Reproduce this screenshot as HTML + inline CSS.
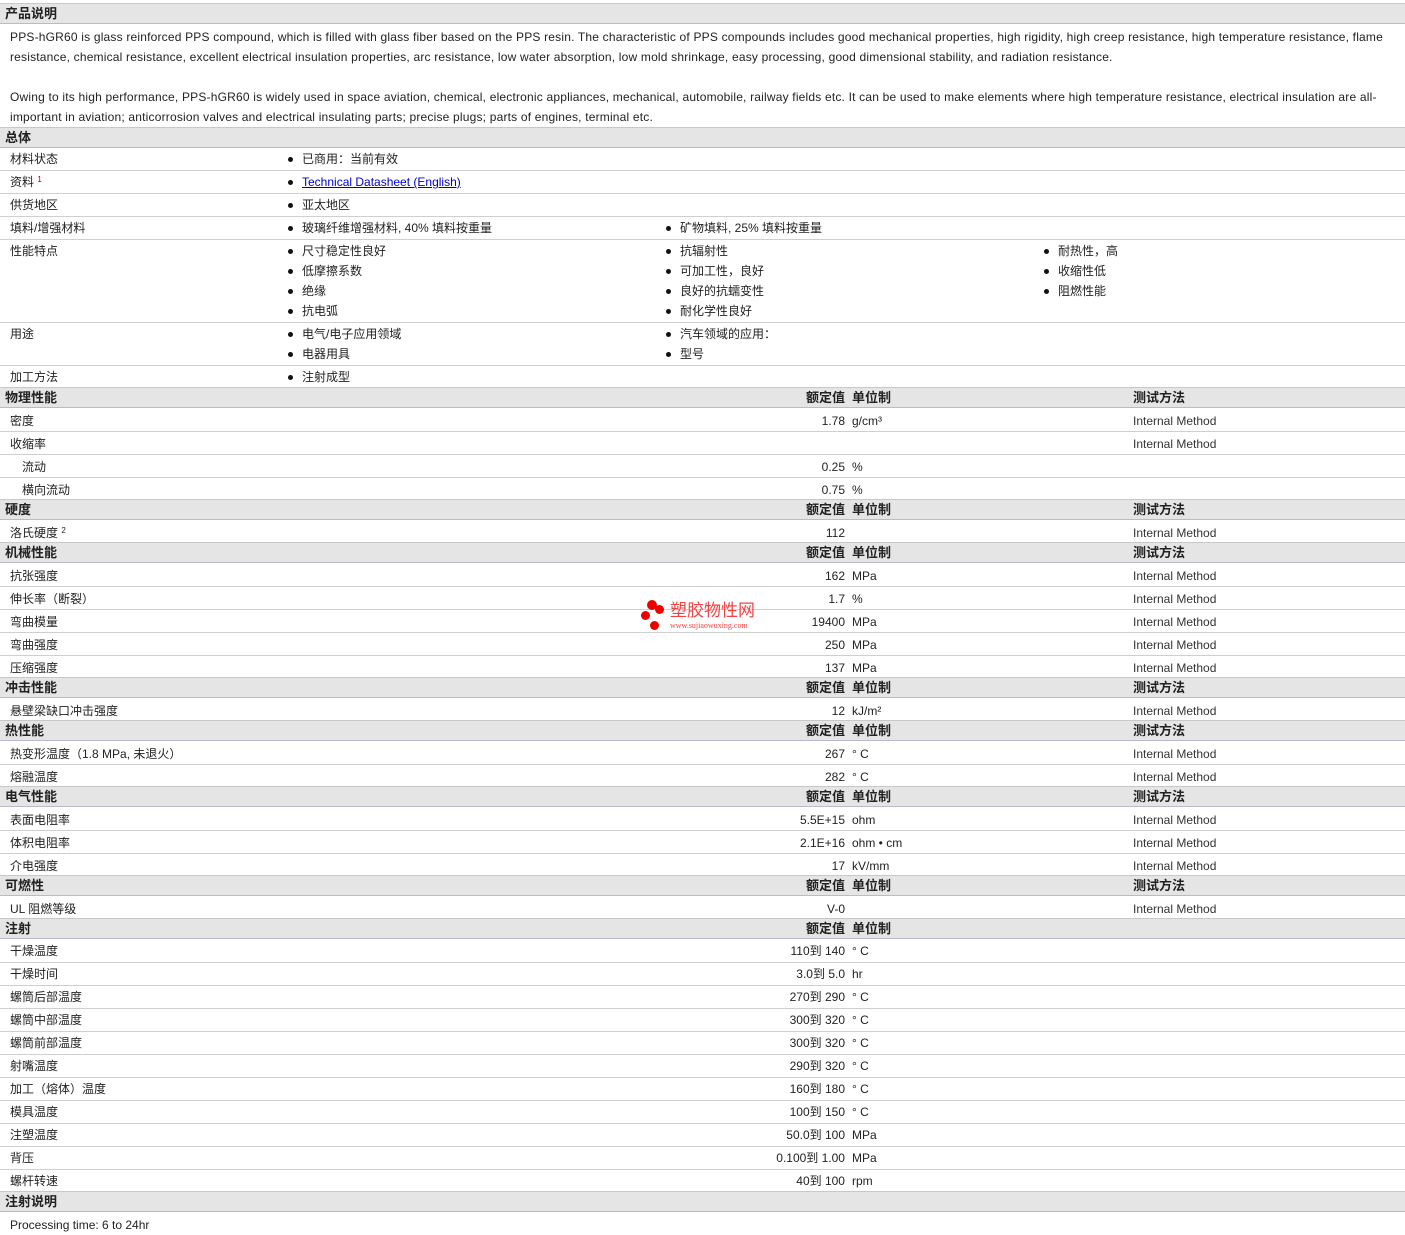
<!DOCTYPE html>
<html><head><meta charset="utf-8"><style>
body{margin:0;width:1405px;height:1233px;background:#fff;position:relative;overflow:hidden;font-family:"Liberation Sans","Noto Sans CJK SC",sans-serif;font-size:12px;color:#222}
.h{position:absolute;left:0;width:1405px;height:19px;background:#e6e5e5;border-top:1px solid #c8c8c8;border-bottom:1px solid #bdb8cc;font-weight:bold;font-size:13px;line-height:19px}
.r{position:absolute;left:0;width:1405px;border-bottom:1px solid #cfcfcf}
.t,.v,.u,.m,.b{margin-top:1px}
.h .t,.h .v,.h .u,.h .m{margin-top:0}
.t{position:absolute;white-space:nowrap;line-height:20px}
.d{letter-spacing:0.19px}
.v{position:absolute;right:560px;white-space:nowrap;line-height:20px;text-align:right}
.u{position:absolute;left:852px;white-space:nowrap;line-height:20px}
.m{position:absolute;left:1133px;white-space:nowrap;line-height:20px;color:#333}
.b{position:absolute;white-space:nowrap;line-height:20px}
.b:before{content:"";position:absolute;left:-14px;top:8px;width:5px;height:5px;border-radius:50%;background:#111}
sup{font-size:8px;position:relative;top:-4px;vertical-align:baseline;line-height:0}
a{color:#00c;text-decoration:underline}
</style></head><body>

<div class="h" style="top:3px"><span class="t" style="left:5px;line-height:19px">产品说明</span></div>
<div class="t d" style="left:10px;top:26px">PPS-hGR60 is glass reinforced PPS compound, which is filled with glass fiber based on the PPS resin. The characteristic of PPS compounds includes good mechanical properties, high rigidity, high creep resistance, high temperature resistance, flame</div>
<div class="t d" style="left:10px;top:46px">resistance, chemical resistance, excellent electrical insulation properties, arc resistance, low water absorption, low mold shrinkage, easy processing, good dimensional stability, and radiation resistance.</div>
<div class="t d" style="left:10px;top:86px">Owing to its high performance, PPS-hGR60 is widely used in space aviation, chemical, electronic appliances, mechanical, automobile, railway fields etc. It can be used to make elements where high temperature resistance, electrical insulation are all-</div>
<div class="t d" style="left:10px;top:106px">important in aviation; anticorrosion valves and electrical insulating parts; precise plugs; parts of engines, terminal etc.</div>

<div class="h" style="top:127px"><span class="t" style="left:5px;line-height:19px">总体</span></div>
<div class="r" style="top:148px;height:22px"><span class="t" style="left:10px">材料状态</span><span class="b" style="left:302px">已商用：当前有效</span></div>
<div class="r" style="top:171px;height:22px"><span class="t" style="left:10px">资料 <sup style="color:#a00">1</sup></span><span class="b" style="left:302px"><a>Technical Datasheet (English)</a></span></div>
<div class="r" style="top:194px;height:22px"><span class="t" style="left:10px">供货地区</span><span class="b" style="left:302px">亚太地区</span></div>
<div class="r" style="top:217px;height:22px"><span class="t" style="left:10px">填料/增强材料</span><span class="b" style="left:302px">玻璃纤维增强材料, 40% 填料按重量</span><span class="b" style="left:680px">矿物填料, 25% 填料按重量</span></div>
<div class="r" style="top:240px;height:82px"><span class="t" style="left:10px">性能特点</span>
<span class="b" style="left:302px;top:0">尺寸稳定性良好</span><span class="b" style="left:302px;top:20px">低摩擦系数</span><span class="b" style="left:302px;top:40px">绝缘</span><span class="b" style="left:302px;top:60px">抗电弧</span>
<span class="b" style="left:680px;top:0">抗辐射性</span><span class="b" style="left:680px;top:20px">可加工性，良好</span><span class="b" style="left:680px;top:40px">良好的抗蠕变性</span><span class="b" style="left:680px;top:60px">耐化学性良好</span>
<span class="b" style="left:1058px;top:0">耐热性，高</span><span class="b" style="left:1058px;top:20px">收缩性低</span><span class="b" style="left:1058px;top:40px">阻燃性能</span></div>
<div class="r" style="top:323px;height:42px"><span class="t" style="left:10px">用途</span>
<span class="b" style="left:302px;top:0">电气/电子应用领域</span><span class="b" style="left:302px;top:20px">电器用具</span>
<span class="b" style="left:680px;top:0">汽车领域的应用：</span><span class="b" style="left:680px;top:20px">型号</span></div>
<div class="r" style="top:366px;height:21px;border:none"><span class="t" style="left:10px">加工方法</span><span class="b" style="left:302px">注射成型</span></div>

<div class="h" style="top:387px"><span class="t" style="left:5px;line-height:19px">物理性能</span><span class="v" style="line-height:19px">额定值</span><span class="u" style="line-height:19px">单位制</span><span class="m" style="line-height:19px;color:#222">测试方法</span></div>
<div class="r" style="top:410px;height:21px"><span class="t" style="left:10px">密度</span><span class="v">1.78</span><span class="u">g/cm³</span><span class="m">Internal Method</span></div>
<div class="r" style="top:433px;height:21px"><span class="t" style="left:10px">收缩率</span><span class="m">Internal Method</span></div>
<div class="r" style="top:456px;height:21px"><span class="t" style="left:22px">流动</span><span class="v">0.25</span><span class="u">%</span></div>
<div class="r" style="top:479px;height:20px;border:none"><span class="t" style="left:22px">横向流动</span><span class="v">0.75</span><span class="u">%</span></div>

<div class="h" style="top:499px"><span class="t" style="left:5px;line-height:19px">硬度</span><span class="v" style="line-height:19px">额定值</span><span class="u" style="line-height:19px">单位制</span><span class="m" style="line-height:19px;color:#222">测试方法</span></div>
<div class="r" style="top:522px;height:20px;border:none"><span class="t" style="left:10px">洛氏硬度 <sup>2</sup></span><span class="v">112</span><span class="m">Internal Method</span></div>

<div class="h" style="top:542px"><span class="t" style="left:5px;line-height:19px">机械性能</span><span class="v" style="line-height:19px">额定值</span><span class="u" style="line-height:19px">单位制</span><span class="m" style="line-height:19px;color:#222">测试方法</span></div>
<div class="r" style="top:565px;height:21px"><span class="t" style="left:10px">抗张强度</span><span class="v">162</span><span class="u">MPa</span><span class="m">Internal Method</span></div>
<div class="r" style="top:588px;height:21px"><span class="t" style="left:10px">伸长率（断裂）</span><span class="v">1.7</span><span class="u">%</span><span class="m">Internal Method</span></div>
<div class="r" style="top:611px;height:21px"><span class="t" style="left:10px">弯曲模量</span><span class="v">19400</span><span class="u">MPa</span><span class="m">Internal Method</span></div>
<div class="r" style="top:634px;height:21px"><span class="t" style="left:10px">弯曲强度</span><span class="v">250</span><span class="u">MPa</span><span class="m">Internal Method</span></div>
<div class="r" style="top:657px;height:20px;border:none"><span class="t" style="left:10px">压缩强度</span><span class="v">137</span><span class="u">MPa</span><span class="m">Internal Method</span></div>

<div class="h" style="top:677px"><span class="t" style="left:5px;line-height:19px">冲击性能</span><span class="v" style="line-height:19px">额定值</span><span class="u" style="line-height:19px">单位制</span><span class="m" style="line-height:19px;color:#222">测试方法</span></div>
<div class="r" style="top:700px;height:20px;border:none"><span class="t" style="left:10px">悬壁梁缺口冲击强度</span><span class="v">12</span><span class="u">kJ/m²</span><span class="m">Internal Method</span></div>

<div class="h" style="top:720px"><span class="t" style="left:5px;line-height:19px">热性能</span><span class="v" style="line-height:19px">额定值</span><span class="u" style="line-height:19px">单位制</span><span class="m" style="line-height:19px;color:#222">测试方法</span></div>
<div class="r" style="top:743px;height:21px"><span class="t" style="left:10px">热变形温度（1.8 MPa, 未退火）</span><span class="v">267</span><span class="u">° C</span><span class="m">Internal Method</span></div>
<div class="r" style="top:766px;height:20px;border:none"><span class="t" style="left:10px">熔融温度</span><span class="v">282</span><span class="u">° C</span><span class="m">Internal Method</span></div>

<div class="h" style="top:786px"><span class="t" style="left:5px;line-height:19px">电气性能</span><span class="v" style="line-height:19px">额定值</span><span class="u" style="line-height:19px">单位制</span><span class="m" style="line-height:19px;color:#222">测试方法</span></div>
<div class="r" style="top:809px;height:21px"><span class="t" style="left:10px">表面电阻率</span><span class="v">5.5E+15</span><span class="u">ohm</span><span class="m">Internal Method</span></div>
<div class="r" style="top:832px;height:21px"><span class="t" style="left:10px">体积电阻率</span><span class="v">2.1E+16</span><span class="u">ohm • cm</span><span class="m">Internal Method</span></div>
<div class="r" style="top:855px;height:20px;border:none"><span class="t" style="left:10px">介电强度</span><span class="v">17</span><span class="u">kV/mm</span><span class="m">Internal Method</span></div>

<div class="h" style="top:875px"><span class="t" style="left:5px;line-height:19px">可燃性</span><span class="v" style="line-height:19px">额定值</span><span class="u" style="line-height:19px">单位制</span><span class="m" style="line-height:19px;color:#222">测试方法</span></div>
<div class="r" style="top:898px;height:20px;border:none"><span class="t" style="left:10px">UL 阻燃等级</span><span class="v">V-0</span><span class="m">Internal Method</span></div>

<div class="h" style="top:918px"><span class="t" style="left:5px;line-height:19px">注射</span><span class="v" style="line-height:19px">额定值</span><span class="u" style="line-height:19px">单位制</span></div>
<div class="r" style="top:940px;height:22px"><span class="t" style="left:10px">干燥温度</span><span class="v">110到 140</span><span class="u">° C</span></div>
<div class="r" style="top:963px;height:22px"><span class="t" style="left:10px">干燥时间</span><span class="v">3.0到 5.0</span><span class="u">hr</span></div>
<div class="r" style="top:986px;height:22px"><span class="t" style="left:10px">螺筒后部温度</span><span class="v">270到 290</span><span class="u">° C</span></div>
<div class="r" style="top:1009px;height:22px"><span class="t" style="left:10px">螺筒中部温度</span><span class="v">300到 320</span><span class="u">° C</span></div>
<div class="r" style="top:1032px;height:22px"><span class="t" style="left:10px">螺筒前部温度</span><span class="v">300到 320</span><span class="u">° C</span></div>
<div class="r" style="top:1055px;height:22px"><span class="t" style="left:10px">射嘴温度</span><span class="v">290到 320</span><span class="u">° C</span></div>
<div class="r" style="top:1078px;height:22px"><span class="t" style="left:10px">加工（熔体）温度</span><span class="v">160到 180</span><span class="u">° C</span></div>
<div class="r" style="top:1101px;height:22px"><span class="t" style="left:10px">模具温度</span><span class="v">100到 150</span><span class="u">° C</span></div>
<div class="r" style="top:1124px;height:22px"><span class="t" style="left:10px">注塑温度</span><span class="v">50.0到 100</span><span class="u">MPa</span></div>
<div class="r" style="top:1147px;height:22px"><span class="t" style="left:10px">背压</span><span class="v">0.100到 1.00</span><span class="u">MPa</span></div>
<div class="r" style="top:1170px;height:21px;border:none"><span class="t" style="left:10px">螺杆转速</span><span class="v">40到 100</span><span class="u">rpm</span></div>

<div class="h" style="top:1191px"><span class="t" style="left:5px;line-height:19px">注射说明</span></div>
<div class="t" style="left:10px;top:1214px">Processing time: 6 to 24hr</div>

<div style="position:absolute;left:640px;top:599px;width:130px;height:34px">
<div style="position:absolute;left:7px;top:1px;width:10px;height:10px;border-radius:50%;background:#e00"></div>
<div style="position:absolute;left:15px;top:6px;width:9px;height:9px;border-radius:50%;background:#e00"></div>
<div style="position:absolute;left:1px;top:12px;width:9px;height:9px;border-radius:50%;background:#e00"></div>
<div style="position:absolute;left:10px;top:22px;width:9px;height:9px;border-radius:50%;background:#e00"></div>
<div style="position:absolute;left:30px;top:2px;font-size:17px;color:#e44;line-height:20px;white-space:nowrap">塑胶物性网</div>
<div style="position:absolute;left:30px;top:22px;font-size:8px;color:#e44;font-family:'Liberation Serif',serif;white-space:nowrap">www.sujiaowuxing.com</div>
</div>
</body></html>
